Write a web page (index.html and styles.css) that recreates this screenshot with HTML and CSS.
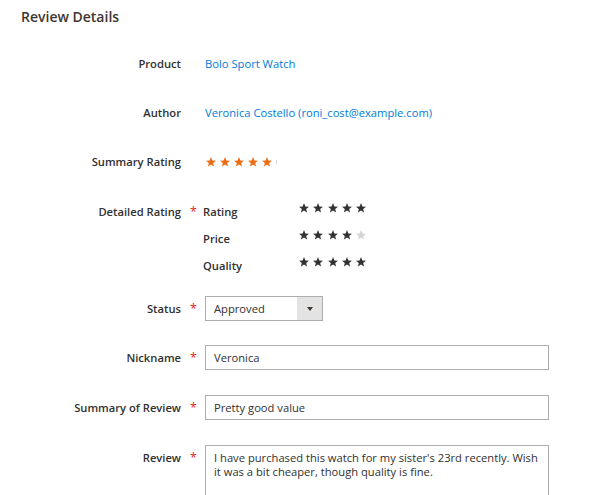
FILE: index.html
```html
<!DOCTYPE html>
<html>
<head>
<meta charset="utf-8">
<title>Review Details</title>
<link rel="stylesheet" href="styles.css">
</head>
<body>
<svg class="defs" width="0" height="0" aria-hidden="true">
  <symbol id="star" viewBox="0 0 10 10">
    <polygon points="5,0.1 6.35,3.44 9.95,3.69 7.19,6.01 8.06,9.51 5,7.6 1.94,9.51 2.81,6.01 0.05,3.69 3.65,3.44"/>
  </symbol>
</svg>
<h2 class="title">Review Details</h2>
<div class="fields">
  <div class="field">
    <div class="label">Product</div>
    <div class="mark"></div>
    <div class="control text"><a class="link" href="#">Bolo Sport Watch</a></div>
  </div>
  <div class="field">
    <div class="label">Author</div>
    <div class="mark"></div>
    <div class="control text"><a class="link" href="#">Veronica Costello (roni_cost@example.com)</a></div>
  </div>
  <div class="field">
    <div class="label">Summary Rating</div>
    <div class="mark"></div>
    <div class="control stars stars-summary">
      <svg class="star"><use href="#star"/></svg>
      <svg class="star"><use href="#star"/></svg>
      <svg class="star"><use href="#star"/></svg>
      <svg class="star"><use href="#star"/></svg>
      <svg class="star"><use href="#star"/></svg>
      <span class="rating-tail"></span>
    </div>
  </div>
  <div class="field field-detailed">
    <div class="label">Detailed Rating</div>
    <div class="mark">*</div>
    <div class="control subrows">
      <div class="sublabel">Rating</div>
      <div class="stars stars-detail">
        <svg class="star"><use href="#star"/></svg>
        <svg class="star"><use href="#star"/></svg>
        <svg class="star"><use href="#star"/></svg>
        <svg class="star"><use href="#star"/></svg>
        <svg class="star"><use href="#star"/></svg>
      </div>
      <div class="sublabel">Price</div>
      <div class="stars stars-detail">
        <svg class="star"><use href="#star"/></svg>
        <svg class="star"><use href="#star"/></svg>
        <svg class="star"><use href="#star"/></svg>
        <svg class="star"><use href="#star"/></svg>
        <svg class="star star-off"><use href="#star"/></svg>
      </div>
      <div class="sublabel">Quality</div>
      <div class="stars stars-detail">
        <svg class="star"><use href="#star"/></svg>
        <svg class="star"><use href="#star"/></svg>
        <svg class="star"><use href="#star"/></svg>
        <svg class="star"><use href="#star"/></svg>
        <svg class="star"><use href="#star"/></svg>
      </div>
    </div>
  </div>
  <div class="field">
    <div class="label">Status</div>
    <div class="mark">*</div>
    <div class="control">
      <div class="select">
        <span class="select-value">Approved</span>
        <span class="select-arrow"><span class="caret"></span></span>
      </div>
    </div>
  </div>
  <div class="field field-wide">
    <div class="label">Nickname</div>
    <div class="mark">*</div>
    <div class="control"><input class="input" type="text" value="Veronica"></div>
  </div>
  <div class="field field-wide">
    <div class="label">Summary of Review</div>
    <div class="mark">*</div>
    <div class="control"><input class="input" type="text" value="Pretty good value"></div>
  </div>
  <div class="field">
    <div class="label">Review</div>
    <div class="mark">*</div>
    <div class="control"><textarea class="textarea">I have purchased this watch for my sister's 23rd recently. Wish it was a bit cheaper, though quality is fine.</textarea></div>
  </div>
</div>
</body>
</html>
```
FILE: styles.css
```css
html, body {
  margin: 0;
  padding: 0;
  background: #ffffff;
  overflow: hidden;
}

body {
  font-family: "Open Sans", "DejaVu Sans", sans-serif;
  font-size: 11.2px;
  color: #303030;
}

.defs {
  display: block;
  width: 0;
  height: 0;
  overflow: hidden;
}

.title {
  margin: 0;
  padding: 6px 0 0 21px;
  font-size: 14px;
  line-height: 22px;
  font-weight: 600;
  color: #41362f;
}

.fields {
  margin-top: 23px;
}

.field {
  display: grid;
  grid-template-columns: 181px 24px 344px;
  margin-bottom: 24px;
}

.field-wide {
  margin-bottom: 25px;
}

.label {
  text-align: right;
  font-weight: 600;
  line-height: 25px;
  color: #303030;
  white-space: nowrap;
}

.mark {
  padding-left: 9px;
  line-height: 25px;
  color: #e22626;
  font-size: 12.5px;
}

.control {
  min-height: 25px;
}

.text {
  line-height: 25px;
}

.link {
  color: #007bdb;
  text-decoration: none;
}

.stars {
  display: flex;
  align-items: center;
}

.stars-summary {
  gap: 4px;
  padding-left: 1px;
  fill: #ed6c12;
}

.star {
  width: 10px;
  height: 10px;
  flex: none;
}

.rating-tail {
  width: 1px;
  height: 4px;
  background: #d6d6d6;
}

.field-detailed {
  margin-bottom: 17px;
}

.field-detailed .label,
.field-detailed .mark {
  line-height: 27px;
}

.subrows {
  display: grid;
  grid-template-columns: 96px auto;
  grid-auto-rows: 27px;
  margin-left: -2px;
}

.sublabel {
  font-weight: 600;
  line-height: 27px;
  color: #303030;
}

.stars-detail {
  gap: 4.3px;
  height: 27px;
  padding-bottom: 7px;
  box-sizing: border-box;
  fill: #333333;
}

.star-off {
  fill: #d4d4d4;
}

.select {
  display: flex;
  width: 118px;
  height: 25px;
  box-sizing: border-box;
  border: 1px solid #adadad;
  background: #ffffff;
}

.select-value {
  flex: 1;
  padding-left: 8px;
  line-height: 23px;
}

.select-arrow {
  width: 25px;
  background: #e3e3e3;
  display: flex;
  align-items: center;
  justify-content: center;
}

.caret {
  width: 0;
  height: 0;
  border-left: 3px solid transparent;
  border-right: 3px solid transparent;
  border-top: 4px solid #41362f;
}

.input {
  display: block;
  width: 344px;
  height: 25px;
  box-sizing: border-box;
  margin: 0;
  border: 1px solid #adadad;
  border-radius: 0;
  padding: 0 8px;
  font-family: "Open Sans", "DejaVu Sans", sans-serif;
  font-size: 11.2px;
  color: #303030;
  background: #ffffff;
  outline: none;
}

.textarea {
  display: block;
  width: 344px;
  height: 90px;
  box-sizing: border-box;
  margin: 0;
  border: 1px solid #adadad;
  border-radius: 0;
  padding: 5px 8px;
  font-family: "Open Sans", "DejaVu Sans", sans-serif;
  font-size: 11.2px;
  line-height: 14px;
  color: #303030;
  background: #ffffff;
  resize: none;
  overflow: hidden;
  outline: none;
}
```
